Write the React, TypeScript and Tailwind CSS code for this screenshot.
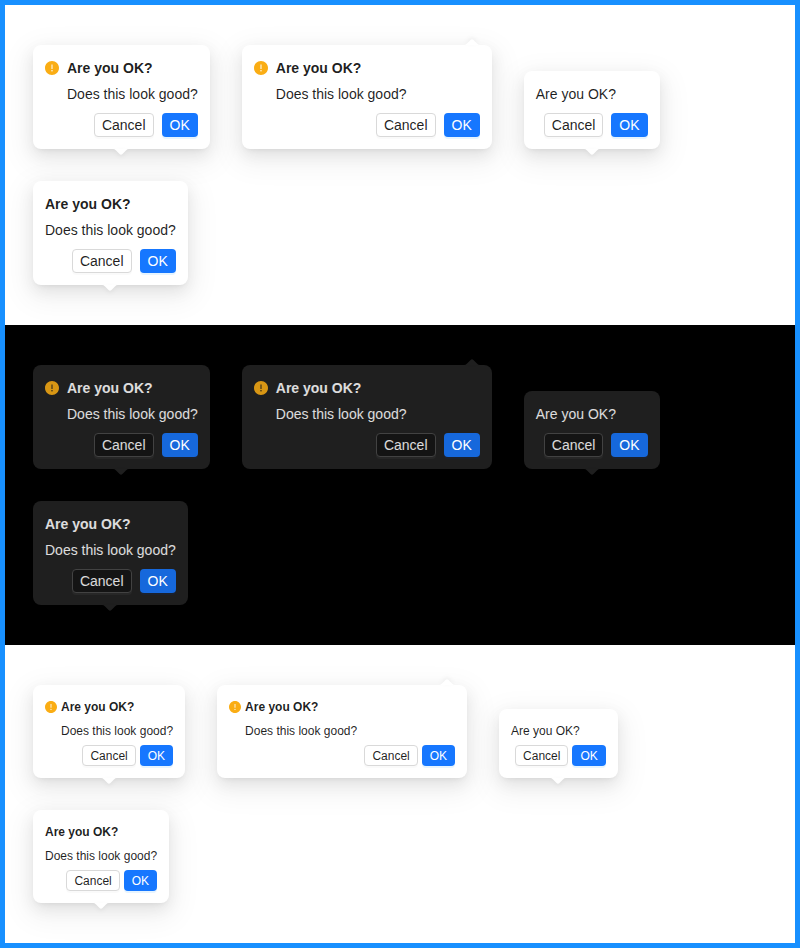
import { AiFillExclamationCircle } from "react-icons/ai";
import clsx from "clsx";

type Theme = "light" | "dark" | "compact";
type Placement = "top" | "bottomRight";

interface CardProps {
  theme: Theme;
  placement?: Placement;
  icon?: boolean;
  title: string;
  description?: string;
  wide?: boolean;
}

function Arrow({ theme, placement }: { theme: Theme; placement: Placement }) {
  return (
    <svg
      viewBox="0 0 16 8"
      className={clsx(
        "absolute h-2 w-4 drop-shadow-[0_-2px_2px_rgba(0,0,0,0.05)]",
        placement === "top" && "left-1/2 top-full -translate-x-1/2 rotate-180",
        placement === "bottomRight" && "bottom-full right-3",
        theme === "dark" ? "text-[#1f1f1f]" : "text-white",
      )}
    >
      <path
        fill="currentColor"
        d="M0 8A4 4 0 0 0 2.828 6.828L6.586 3.071A2 2 0 0 1 9.414 3.071L13.172 6.828A4 4 0 0 0 16 8Z"
      />
    </svg>
  );
}

function Card({ theme, placement = "top", icon, title, description, wide }: CardProps) {
  const dark = theme === "dark";
  const compact = theme === "compact";
  const button = clsx(
    "box-border rounded border whitespace-nowrap px-[7px]",
    compact ? "h-[21px] pt-px leading-[18px]" : "h-6 leading-[22px]",
  );
  return (
    <div
      className={clsx(
        "relative rounded-lg p-3 shadow-[0_6px_16px_0_rgba(0,0,0,0.08),0_3px_6px_-4px_rgba(0,0,0,0.12),0_9px_28px_8px_rgba(0,0,0,0.05)]",
        dark ? "bg-[#1f1f1f]" : "bg-white",
        wide && "w-[250px]",
      )}
    >
      <div className={clsx("flex items-start", compact ? "mb-1 gap-1" : "mb-2 gap-2")}>
        {icon && (
          <span className={clsx("flex items-center", compact ? "h-5" : "h-[22px]")}>
            <AiFillExclamationCircle
              viewBox="64 64 896 896"
              className={clsx(
                compact ? "size-3" : "size-3.5",
                dark ? "text-[#d89614]" : "text-[#faad14]",
              )}
            />
          </span>
        )}
        <div className="whitespace-nowrap">
          <div className={clsx(description && "font-semibold")}>{title}</div>
          {description && <div className="mt-1">{description}</div>}
        </div>
      </div>
      <div className={clsx("flex justify-end", compact ? "gap-1 pl-1" : "gap-2 pl-2")}>
        <button
          className={clsx(
            button,
            dark
              ? "border-[#424242] bg-[#141414] shadow-[0_2px_0_rgba(255,255,255,0.04)]"
              : "border-[#d9d9d9] bg-white shadow-[0_2px_0_rgba(0,0,0,0.02)]",
          )}
        >
          Cancel
        </button>
        <button
          className={clsx(
            button,
            "border-transparent text-white",
            dark
              ? "bg-[#1668dc] shadow-[0_2px_0_rgba(0,60,180,0.1)]"
              : "bg-[#1677ff] shadow-[0_2px_0_rgba(5,145,255,0.1)]",
          )}
        >
          OK
        </button>
      </div>
      <Arrow theme={theme} placement={placement} />
    </div>
  );
}

function Section({ theme }: { theme: Theme }) {
  return (
    <section
      className={clsx(
        "flex flex-wrap items-end gap-8 overflow-hidden px-7 py-10",
        theme === "dark" ? "bg-black text-white/85" : "bg-white text-black/88",
        theme === "compact" ? "text-[12px] leading-5" : "text-[14px] leading-[22px]",
      )}
    >
      <Card theme={theme} icon title="Are you OK?" description="Does this look good?" />
      <Card
        theme={theme}
        icon
        wide
        placement="bottomRight"
        title="Are you OK?"
        description="Does this look good?"
      />
      <Card theme={theme} title="Are you OK?" />
      <Card theme={theme} title="Are you OK?" description="Does this look good?" />
    </section>
  );
}

export default function App() {
  return (
    <main className="w-full border-[5px] border-[#1890ff] font-['Liberation_Sans',Arial,sans-serif]">
      <Section theme="light" />
      <Section theme="dark" />
      <Section theme="compact" />
    </main>
  );
}
